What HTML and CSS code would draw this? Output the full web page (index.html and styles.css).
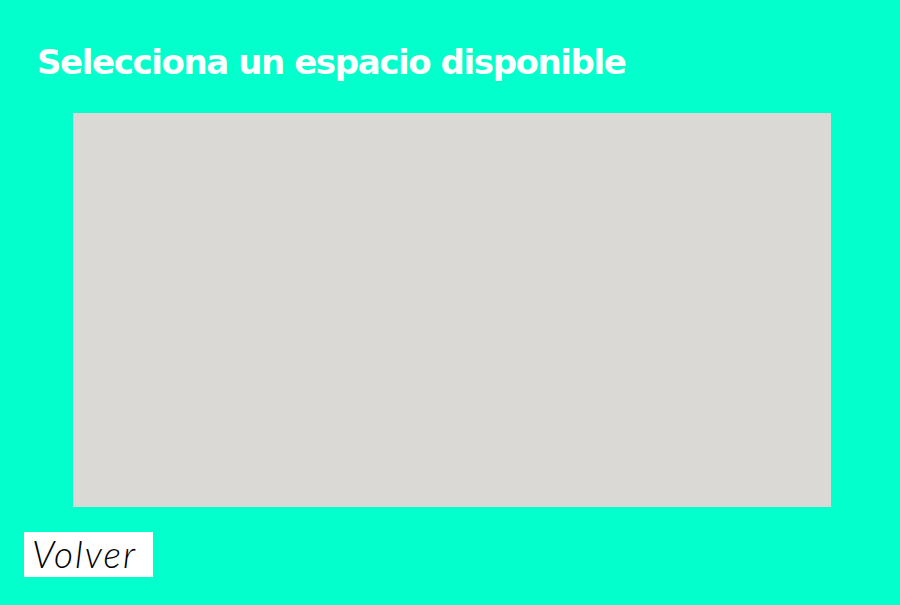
FILE: index.html
```html
<!DOCTYPE html>
<html lang="es">
<head>
<meta charset="utf-8">
<title>Selecciona un espacio disponible</title>
<link rel="stylesheet" href="styles.css">
</head>
<body>
<main class="screen">
  <h1 class="title">Selecciona un espacio disponible</h1>
  <div class="map"></div>
  <button class="back">Volver</button>
</main>
</body>
</html>
```
FILE: styles.css
```css
html, body {
  margin: 0;
  padding: 0;
  background: #02ffcc;
}
.screen {
  width: 900px;
  height: 605px;
  display: flex;
  flex-direction: column;
  align-items: flex-start;
  box-sizing: border-box;
}
.title {
  margin: 39px 0 0 37px;
  height: 46px;
  line-height: 46px;
  font-family: "DejaVu Sans", sans-serif;
  font-weight: bold;
  font-size: 34px;
  letter-spacing: -1.4px;
  color: #ffffff;
  white-space: nowrap;
}
.map {
  margin: 28px 0 0 73px;
  width: 758px;
  height: 394px;
  background: #dad9d6;
}
.back {
  margin: 25px 0 0 24px;
  width: 129px;
  height: 45px;
  line-height: 44px;
  padding: 0 0 1px 8px;
  border: 0;
  background: #ffffff;
  text-align: left;
  font-family: "Lato", sans-serif;
  font-style: italic;
  font-weight: 300;
  font-size: 37px;
  letter-spacing: 2px;
  color: #000000;
  cursor: pointer;
}
```
